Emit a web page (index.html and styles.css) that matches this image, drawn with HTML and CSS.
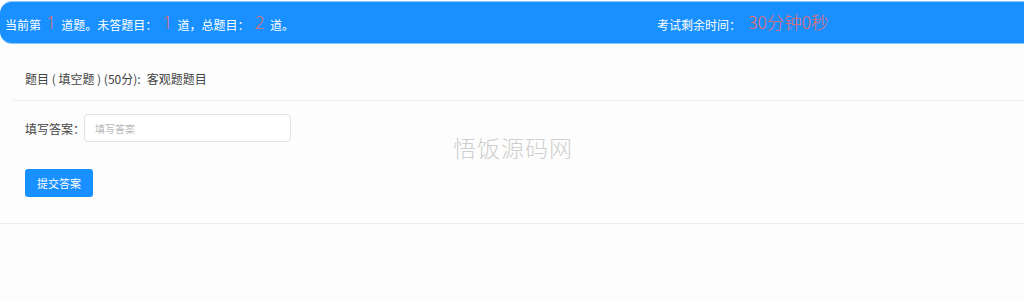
FILE: index.html
```html
<!DOCTYPE html>
<html lang="zh-CN">
<head>
<meta charset="utf-8">
<title>考试</title>
<link rel="stylesheet" href="styles.css">
</head>
<body>
<div class="page">
  <header class="topbar">
    <div class="progress">当前第<span class="num">1</span>道题。未答题目：<span class="num">1</span>道，总题目：<span class="num">2</span>道。</div>
    <div class="timer">考试剩余时间：<span class="time">30分钟0秒</span></div>
  </header>
  <main class="card">
    <div class="question">题目 ( 填空题 ) (50分):<span class="qtext">客观题题目</span></div>
    <div class="answer-row">
      <label class="answer-label">填写答案：</label>
      <input class="answer-input" type="text" placeholder="填写答案">
    </div>
    <div class="actions">
      <button class="submit" type="button">提交答案</button>
    </div>
  </main>
  <div class="watermark">悟饭源码网</div>
</div>
</body>
</html>
```

FILE: styles.css
```css
* { box-sizing: border-box; }
html, body {
  margin: 0;
  padding: 0;
  background: #fdfdfd;
  font-family: "Noto Sans CJK SC", "Noto Sans", sans-serif;
  color: #333;
}
.page {
  position: relative;
  width: 1024px;
  height: 301px;
  overflow: hidden;
  padding-top: 2px;
}
.topbar {
  display: grid;
  grid-template-columns: 652px 1fr;
  align-items: center;
  height: 41px;
  margin-right: -20px;
  padding-left: 5px;
  background: #1890ff;
  border-radius: 12px 0 0 12px;
  box-shadow: 0 -1px 0 #8cc4fb, 0 1px 0 #8cc4fb;
  color: #fff;
  font-size: 12px;
  white-space: nowrap;
}
.num {
  color: #ee6a6a;
  font-family: "Open Sans", "Liberation Sans", sans-serif;
  font-size: 18px;
  margin: 0 5px;
  font-weight: 300;
  position: relative;
  top: -1px;
}
.time {
  color: #ee6a6a;
  font-size: 17.5px;
  margin-left: 7px;
  font-weight: 300;
  position: relative;
  top: -1px;
}
.card {
  margin-top: 1px;
  border-bottom: 1px solid #efefef;
  padding-bottom: 26px;
}
.question {
  margin-left: 12px;
  padding: 25px 0 11px 13px;
  font-size: 12px;
  color: #444;
  border-bottom: 1px solid #f0f0f0;
  line-height: 20px;
  white-space: nowrap;
}
.qtext { margin-left: 6px; }
.answer-row {
  display: flex;
  align-items: center;
  padding: 13px 0 0 25px;
}
.answer-label {
  flex-shrink: 0;
  white-space: nowrap;
  font-size: 12px;
  color: #444;
  width: 59px;
}
.answer-input {
  width: 207px;
  height: 28px;
  border: 1px solid #e3e3e3;
  border-radius: 4px;
  background: #fff;
  padding: 0 10px;
  font-family: inherit;
  font-size: 10px;
  outline: none;
}
.answer-input::placeholder { color: #b8b8b8; }
.actions {
  padding: 27px 0 0 25px;
}
.submit {
  display: block;
  width: 68px;
  height: 28px;
  border: none;
  border-radius: 3px;
  background: #1890ff;
  color: #fff;
  font-family: inherit;
  font-size: 11px;
  padding: 0;
}
.watermark {
  position: absolute;
  left: 453px;
  top: 130px;
  font-size: 23px;
  letter-spacing: 1px;
  color: #cfcfcf;
  font-weight: 300;
}
```
